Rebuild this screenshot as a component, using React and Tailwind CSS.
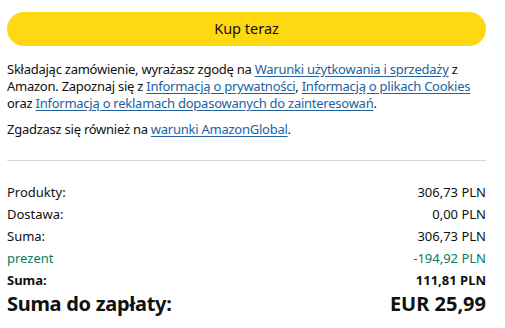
export default function App() {
  const link = "text-[#2162a1] underline underline-offset-2";
  return (
    <div className="w-[505px] h-[328px] overflow-hidden bg-white text-[#0f1111] font-['Noto_Sans',sans-serif]">
      <div className="w-[479px] ml-[7px] pt-[12px]">
        <button className="w-full h-[34px] rounded-full bg-[#ffd814] text-[14.5px] text-[#0f1111] flex items-center justify-center">
          Kup teraz
        </button>
        <p className="mt-[15px] text-[13px] leading-[17px] tracking-[-0.25px]">
          Składając zamówienie, wyrażasz zgodę na <a className={link}>Warunki użytkowania i sprzedaży</a> z Amazon. Zapoznaj się z <a className={link}>Informacją o prywatności</a>, <a className={link}>Informacją o plikach Cookies</a> oraz <a className={link}>Informacją o reklamach dopasowanych do zainteresowań</a>.
        </p>
        <p className="mt-[9px] text-[13px] leading-[17px] tracking-[-0.25px]">
          Zgadzasz się również na <a className={link}>warunki AmazonGlobal</a>.
        </p>
        <div className="mt-[22px] h-px bg-[#d5d9d9]" />
        <div className="mt-[20px] text-[13px] leading-[22px]">
          <div className="flex justify-between"><span>Produkty:</span><span>306,73 PLN</span></div>
          <div className="flex justify-between"><span>Dostawa:</span><span>0,00 PLN</span></div>
          <div className="flex justify-between"><span>Suma:</span><span>306,73 PLN</span></div>
          <div className="flex justify-between text-[#067d62]"><span>prezent</span><span>-194,92 PLN</span></div>
          <div className="flex justify-between font-bold"><span>Suma:</span><span>111,81 PLN</span></div>
        </div>
        <div className="flex justify-between text-[20px] leading-[26px] font-bold">
          <span className="tracking-[-0.3px]">Suma do zapłaty:</span><span>EUR 25,99</span>
        </div>
        <p className="mt-[9px] text-[12px] leading-[16px]">
          Transakcja zostanie obciążona w EUR. <a className={link}>Więcej informacji</a>
        </p>
      </div>
    </div>
  );
}
